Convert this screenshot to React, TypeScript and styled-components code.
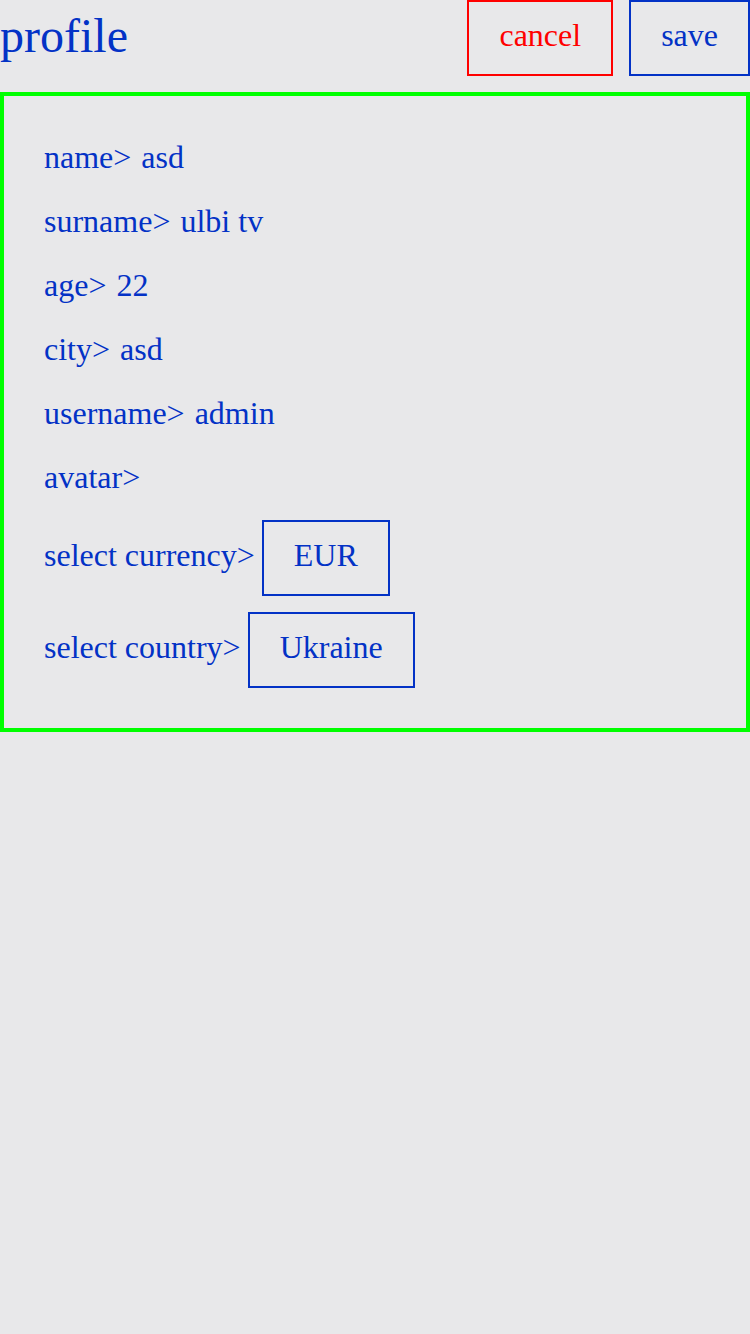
import React from "react";
import styled, { createGlobalStyle } from "styled-components";

const Global = createGlobalStyle`
  html, body { margin: 0; padding: 0; background: #e8e8ea; }
  body { font-family: "Liberation Serif", "Times New Roman", serif; color: #0332c6; }
  * { box-sizing: border-box; }
`;

const Page = styled.div`
  display: flex;
  flex-direction: column;
  gap: 16px;
  width: 750px;
`;

const Header = styled.div`
  display: flex;
  align-items: center;
  height: 76px;
  gap: 16px;
`;

const Title = styled.h1`
  margin: 0;
  flex: 1;
  font-size: 48px;
  font-weight: normal;
  line-height: 1;
  padding-bottom: 4px;
  color: #0332c6;
`;

const Button = styled.button<{ $danger?: boolean }>`
  height: 76px;
  padding: 0 30px 6px;
  background: transparent;
  border: 2px solid ${(p) => (p.$danger ? "#ff0000" : "#0332c6")};
  color: ${(p) => (p.$danger ? "#ff0000" : "#0332c6")};
  font-family: "Liberation Serif", serif;
  font-size: 32px;
  line-height: 1;
  cursor: pointer;
`;

const Card = styled.div`
  border: 4px solid #00ff00;
  padding: 40px;
  display: flex;
  flex-direction: column;
`;

const Row = styled.div`
  height: 40px;
  margin-bottom: 24px;
  padding-top: 2px;
  display: flex;
  align-items: center;
  gap: 10px;
  font-size: 32px;
  line-height: 1;
`;

const SelectRow = styled.div<{ $last?: boolean }>`
  display: flex;
  align-items: center;
  gap: 7px;
  font-size: 32px;
  line-height: 1;
  margin-bottom: ${(p) => (p.$last ? "0" : "16px")};
`;

const SelectLabel = styled.span`
  padding-bottom: 6px;
`;

const SelectBox = styled.div`
  height: 76px;
  padding: 0 30px 6px;
  border: 2px solid #0332c6;
  display: flex;
  align-items: center;
  font-size: 32px;
`;

const fields: [string, string][] = [
  ["name", "asd"],
  ["surname", "ulbi tv"],
  ["age", "22"],
  ["city", "asd"],
  ["username", "admin"],
  ["avatar", ""],
];

export default function App() {
  return (
    <>
      <Global />
      <Page>
        <Header>
          <Title>profile</Title>
          <Button $danger>cancel</Button>
          <Button>save</Button>
        </Header>
        <Card>
          {fields.map(([k, v]) => (
            <Row key={k}>
              <span>{k}&gt;</span>
              {v && <span>{v}</span>}
            </Row>
          ))}
          <SelectRow>
            <SelectLabel>select currency&gt;</SelectLabel>
            <SelectBox>EUR</SelectBox>
          </SelectRow>
          <SelectRow $last>
            <SelectLabel>select country&gt;</SelectLabel>
            <SelectBox>Ukraine</SelectBox>
          </SelectRow>
        </Card>
      </Page>
    </>
  );
}
